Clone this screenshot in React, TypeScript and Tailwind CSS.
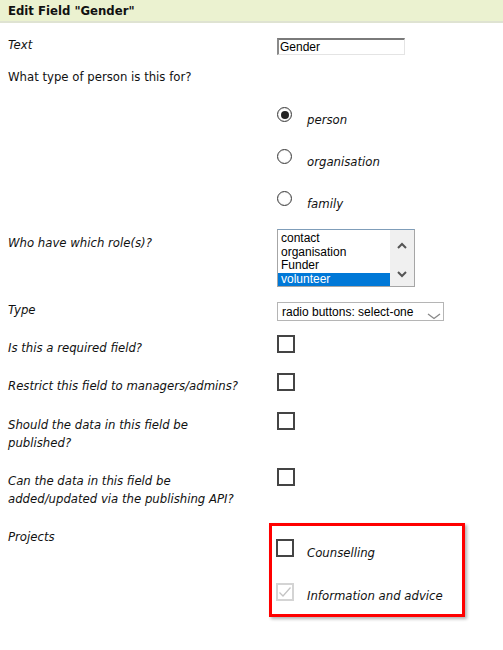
import React from 'react';

const roles = ['contact', 'organisation', 'Funder', 'volunteer'];

function Radio({ checked }: { checked?: boolean }) {
  return (
    <span className="flex h-[15px] w-[15px] shrink-0 items-center justify-center rounded-full border-[1.5px] border-[#3c3c3c] bg-white shadow-[inset_0_0_1px_rgba(0,0,0,0.4)]">
      {checked && <span className="h-[8px] w-[8px] rounded-full bg-[#222]" />}
    </span>
  );
}

function Checkbox({ disabled, checked }: { disabled?: boolean; checked?: boolean }) {
  return (
    <span
      className={`flex h-[18px] w-[18px] shrink-0 items-center justify-center border-2 bg-white ${
        disabled ? 'border-[#d4d4d4]' : 'border-[#444]'
      }`}
    >
      {checked && (
        <svg width="14" height="14" viewBox="0 0 14 14" fill="none">
          <path d="M1.5 7.5L5 11L12.5 2.5" stroke={disabled ? '#c4c4c4' : '#333'} strokeWidth="1.3" />
        </svg>
      )}
    </span>
  );
}

function CheckRow({ lines, className = '' }: { lines: string[]; className?: string }) {
  return (
    <div className={`flex items-start ${className}`}>
      <div className="mt-[4px] w-[269px] italic leading-[18px]">
        {lines.map((l, i) => (
          <div key={i}>{l}</div>
        ))}
      </div>
      <Checkbox />
    </div>
  );
}

export default function App() {
  return (
    <div className="h-[650px] w-[503px] bg-white font-['DejaVu_Sans_Condensed','DejaVu_Sans',sans-serif] text-[13px] text-[#111]">
      {/* header */}
      <div className="flex h-[23px] items-center border-b-2 border-[#dfe3d2] bg-[#ebf2d0] pl-2">
        <h2 className="text-[13px] font-bold leading-none text-[#111]">Edit Field "Gender"</h2>
      </div>

      <div className="px-2">
        {/* Text */}
        <div className="mt-[13px] flex items-start">
          <div className="w-[269px] italic leading-[18px]">Text</div>
          <div className="mt-[2px] flex h-[17px] w-[128px] items-center border border-t-2 border-l-2 border-t-[#7a7a7a] border-l-[#8a8a8a] border-r-[#e4e4e4] border-b-[#e4e4e4] pl-[1px] font-['Liberation_Sans',Arial,sans-serif] text-[12px] text-black">
            Gender
          </div>
        </div>

        <div className="mt-[13px] leading-[18px]">What type of person is this for?</div>

        {/* radios */}
        <div className="ml-[269px] mt-[21px] flex flex-col gap-[20px]">
          {[
            ['person', true],
            ['organisation', false],
            ['family', false],
          ].map(([label, on]) => (
            <div key={label as string} className="flex items-start">
              <Radio checked={on as boolean} />
              <span className="ml-[15px] mt-[4px] italic leading-[18px]">{label as string}</span>
            </div>
          ))}
        </div>

        {/* roles */}
        <div className="mt-[16px] flex items-start">
          <div className="mt-[5px] w-[269px] italic leading-[18px]">Who have which role(s)?</div>
          <div className="flex h-[58px] w-[138px] border border-[#a6a6a6] border-t-[#7f9db9] bg-white font-['Liberation_Sans',Arial,sans-serif] text-[12px] text-black">
            <div className="flex-1 pt-[2px]">
              {roles.map((r) => (
                <div
                  key={r}
                  className={`h-[13.5px] pl-[3px] leading-[13.5px] ${r === 'volunteer' ? 'bg-[#0078d7] text-white' : ''}`}
                >
                  {r}
                </div>
              ))}
            </div>
            <div className="flex w-[24px] flex-col items-center justify-between bg-[#f0f0f0] pb-[8px] pt-[12px]">
              <svg width="10" height="7" viewBox="0 0 10 7" fill="none">
                <path d="M1 6L5 2L9 6" stroke="#555" strokeWidth="2" />
              </svg>
              <svg width="10" height="7" viewBox="0 0 10 7" fill="none">
                <path d="M1 1L5 5L9 1" stroke="#555" strokeWidth="2" />
              </svg>
            </div>
          </div>
        </div>

        {/* type */}
        <div className="mt-[14px] flex items-start">
          <div className="w-[269px] italic leading-[18px]">Type</div>
          <div className="mt-[1px] flex h-[19px] w-[167px] items-center justify-between border border-[#b5b5b5] bg-white pl-[4px] pr-[2px] font-['Liberation_Sans',Arial,sans-serif] text-[12px] text-black">
            <span>radio buttons: select-one</span>
            <svg className="mt-[10px]" width="14" height="7" viewBox="0 0 14 7" fill="none">
              <path d="M1 1L7 5.5L13 1" stroke="#888" strokeWidth="1.3" />
            </svg>
          </div>
        </div>

        <CheckRow className="mt-[14px]" lines={['Is this a required field?']} />
        <CheckRow className="mt-[16px]" lines={['Restrict this field to managers/admins?']} />
        <CheckRow className="mt-[17px]" lines={['Should the data in this field be', 'published?']} />
        <CheckRow className="mt-[16px]" lines={['Can the data in this field be', 'added/updated via the publishing API?']} />

        {/* projects */}
        <div className="mt-[15px] flex items-start">
          <div className="mt-[5px] w-[261px] italic leading-[18px]">Projects</div>
          <div className="flex h-[94px] w-[196px] flex-col border-[3px] border-[#ff0000] pl-[4px] pt-[13px] shadow-[2px_2px_3px_rgba(0,0,0,0.3)]">
            <div className="flex items-start">
              <Checkbox />
              <span className="ml-[13px] mt-[5px] italic leading-[18px]">Counselling</span>
            </div>
            <div className="mt-[21px] flex items-start">
              <Checkbox disabled checked />
              <span className="ml-[13px] mt-[4px] italic leading-[18px]">Information and advice</span>
            </div>
          </div>
        </div>
      </div>
    </div>
  );
}
